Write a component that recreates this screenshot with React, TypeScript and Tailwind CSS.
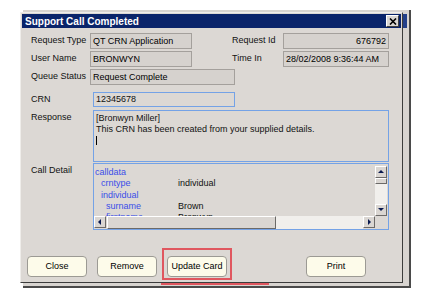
import React from 'react';

const font = { fontFamily: '"Liberation Sans", Arial, sans-serif' };

function Field({ value, w, blue, right }: { value: string; w: string; blue?: boolean; right?: boolean }) {
  return (
    <div
      className={`h-[16px] ${w} flex items-center px-[2px] text-[9px] text-black leading-none ${
        right ? 'justify-end' : ''
      } ${blue ? 'border border-[#74a2e6] bg-[#dad6d2]' : 'border border-[#a4a09c] bg-[#d6d2ce]'}`}
    >
      {value}
    </div>
  );
}

function Btn({ label }: { label: string }) {
  return (
    <div className="h-[21px] w-[60px] flex items-center justify-center rounded-[4px] border border-[#9c9a94] bg-[#fdfbea] text-[9px] text-black">
      {label}
    </div>
  );
}

function Arrow({ dir }: { dir: 'up' | 'down' | 'left' | 'right' }) {
  const pts = {
    up: '1,5 4,2 7,5',
    down: '1,2 4,5 7,2',
    left: '5,1 2,4 5,7',
    right: '3,1 6,4 3,7',
  }[dir];
  return (
    <div className="w-[12px] h-[12px] shrink-0 flex items-center justify-center bg-[#dad6d2] border border-r-[#6c6a68] border-b-[#6c6a68] border-t-white border-l-white">
      <svg width="8" height="8" viewBox="0 0 8 8">
        <polygon points={pts} fill="#0a1a50" />
      </svg>
    </div>
  );
}

export default function App() {
  return (
    <div className="w-[431px] h-[296px] bg-white relative overflow-hidden" style={font}>
      {/* window behind the dialog */}
      <div className="absolute left-[23px] top-[10px] w-[388px] h-[278px] bg-[#d8d4d0] border-r-2 border-b-2 border-[#4a4a4a]">
        <div className="absolute right-[2px] top-[4px] w-[4px] h-[14px] bg-[#23408a]" />
      </div>

      {/* dialog */}
      <div className="absolute left-[20px] top-[12px] w-[383px] h-[271px] bg-[#dcd8d4] border border-t-[#efedea] border-l-[#efedea] border-r-[#3c3c3c] border-b-[#3c3c3c] p-[1px] flex flex-col">
        <div className="h-[14px] shrink-0 bg-[#0a246a] flex items-center justify-between pl-[3px] pr-[2px]">
          <span className="text-white font-bold text-[10px]">Support Call Completed</span>
          <div className="w-[13px] h-[12px] bg-[#dad6d2] border border-t-white border-l-white border-r-[#404040] border-b-[#404040] flex items-center justify-center">
            <svg width="8" height="7" viewBox="0 0 8 7">
              <path d="M1 0.5 L7 6.5 M7 0.5 L1 6.5" stroke="#000" strokeWidth="1.6" />
            </svg>
          </div>
        </div>

        <div className="pl-[9px] pt-[5px] text-[9px] text-[#111]">
          <div className="flex items-center h-[16px]">
            <span className="w-[59px]">Request Type</span>
            <Field value="QT CRN Application" w="w-[102px]" />
            <span className="w-[51px] ml-[40px]">Request Id</span>
            <Field value="676792" w="w-[106px]" right />
          </div>
          <div className="flex items-center h-[16px] mt-[2px]">
            <span className="w-[59px]">User Name</span>
            <Field value="BRONWYN" w="w-[102px]" />
            <span className="w-[51px] ml-[40px]">Time In</span>
            <Field value="28/02/2008 9:36:44 AM" w="w-[106px]" />
          </div>
          <div className="flex items-center h-[16px] mt-[2px]">
            <span className="w-[59px]">Queue Status</span>
            <Field value="Request Complete" w="w-[145px]" />
          </div>

          <div className="flex items-center h-[15px] mt-[7px]">
            <span className="w-[62px]">CRN</span>
            <div className="h-[15px] w-[142px] border border-[#74a2e6] flex items-center px-[2px]">12345678</div>
          </div>

          <div className="flex mt-[3px]">
            <span className="w-[62px] pt-[1px]">Response</span>
            <div className="h-[52px] w-[296px] border border-[#74a2e6] px-[2px] pt-[2px] leading-[11px]">
              <div>[Bronwyn Miller]</div>
              <div>This CRN has been created from your supplied details.</div>
              <div className="w-px h-[9px] bg-black mt-[1px]" />
            </div>
          </div>

          <div className="flex mt-[1px]">
            <span className="w-[62px] pt-[1px]">Call Detail</span>
            <div className="h-[67px] w-[296px] border border-[#74a2e6] flex flex-col">
              <div className="flex h-[52px] overflow-hidden">
                <div className="flex-1 overflow-hidden leading-[11.3px] pt-[3px] pl-[1px]">
                  <div className="text-[#3a4ee8]">calldata</div>
                  <div className="flex">
                    <span className="w-[83px] pl-[6px] text-[#3a4ee8]">crntype</span>
                    <span>individual</span>
                  </div>
                  <div className="pl-[6px] text-[#3a4ee8]">individual</div>
                  <div className="flex">
                    <span className="w-[83px] pl-[11px] text-[#3a4ee8]">surname</span>
                    <span>Brown</span>
                  </div>
                  <div className="flex">
                    <span className="w-[83px] pl-[11px] text-[#3a4ee8]">firstname</span>
                    <span>Bronwyn</span>
                  </div>
                </div>
                <div className="w-[12px] flex flex-col pt-[2px] mr-[1px]">
                  <Arrow dir="up" />
                  <div className="h-[6px] shrink-0 bg-[#dad6d2] border border-r-[#6c6a68] border-b-[#6c6a68] border-t-white border-l-white" />
                  <div className="flex-1 bg-[#f1efec]" />
                  <Arrow dir="down" />
                </div>
              </div>
              <div className="h-[13px] shrink-0 flex items-stretch">
                <Arrow dir="left" />
                <div className="w-[169px] ml-[1px] bg-[#dad6d2] border border-r-[#6c6a68] border-b-[#6c6a68] border-t-white border-l-white" />
                <div className="flex-1 bg-[#f1efec]" />
                <Arrow dir="right" />
                <div className="w-[13px] bg-[#dcd8d4]" />
              </div>
            </div>
          </div>
        </div>

        <div className="flex items-end mt-auto mb-px pl-[5px]">
          <div className="mb-[3px]"><Btn label="Close" /></div>
          <div className="ml-[10px] mb-[3px]"><Btn label="Remove" /></div>
          <div className="ml-[5px] pt-[6px] pb-px px-[3px] border-2 border-[#e0575f]">
            <Btn label="Update Card" />
          </div>
          <div className="ml-[74px] mb-[3px]"><Btn label="Print" /></div>
        </div>
      </div>
      <div className="absolute left-[161px] top-[283px] w-[108px] h-[2px] bg-[#e0575f]" />
    </div>
  );
}
